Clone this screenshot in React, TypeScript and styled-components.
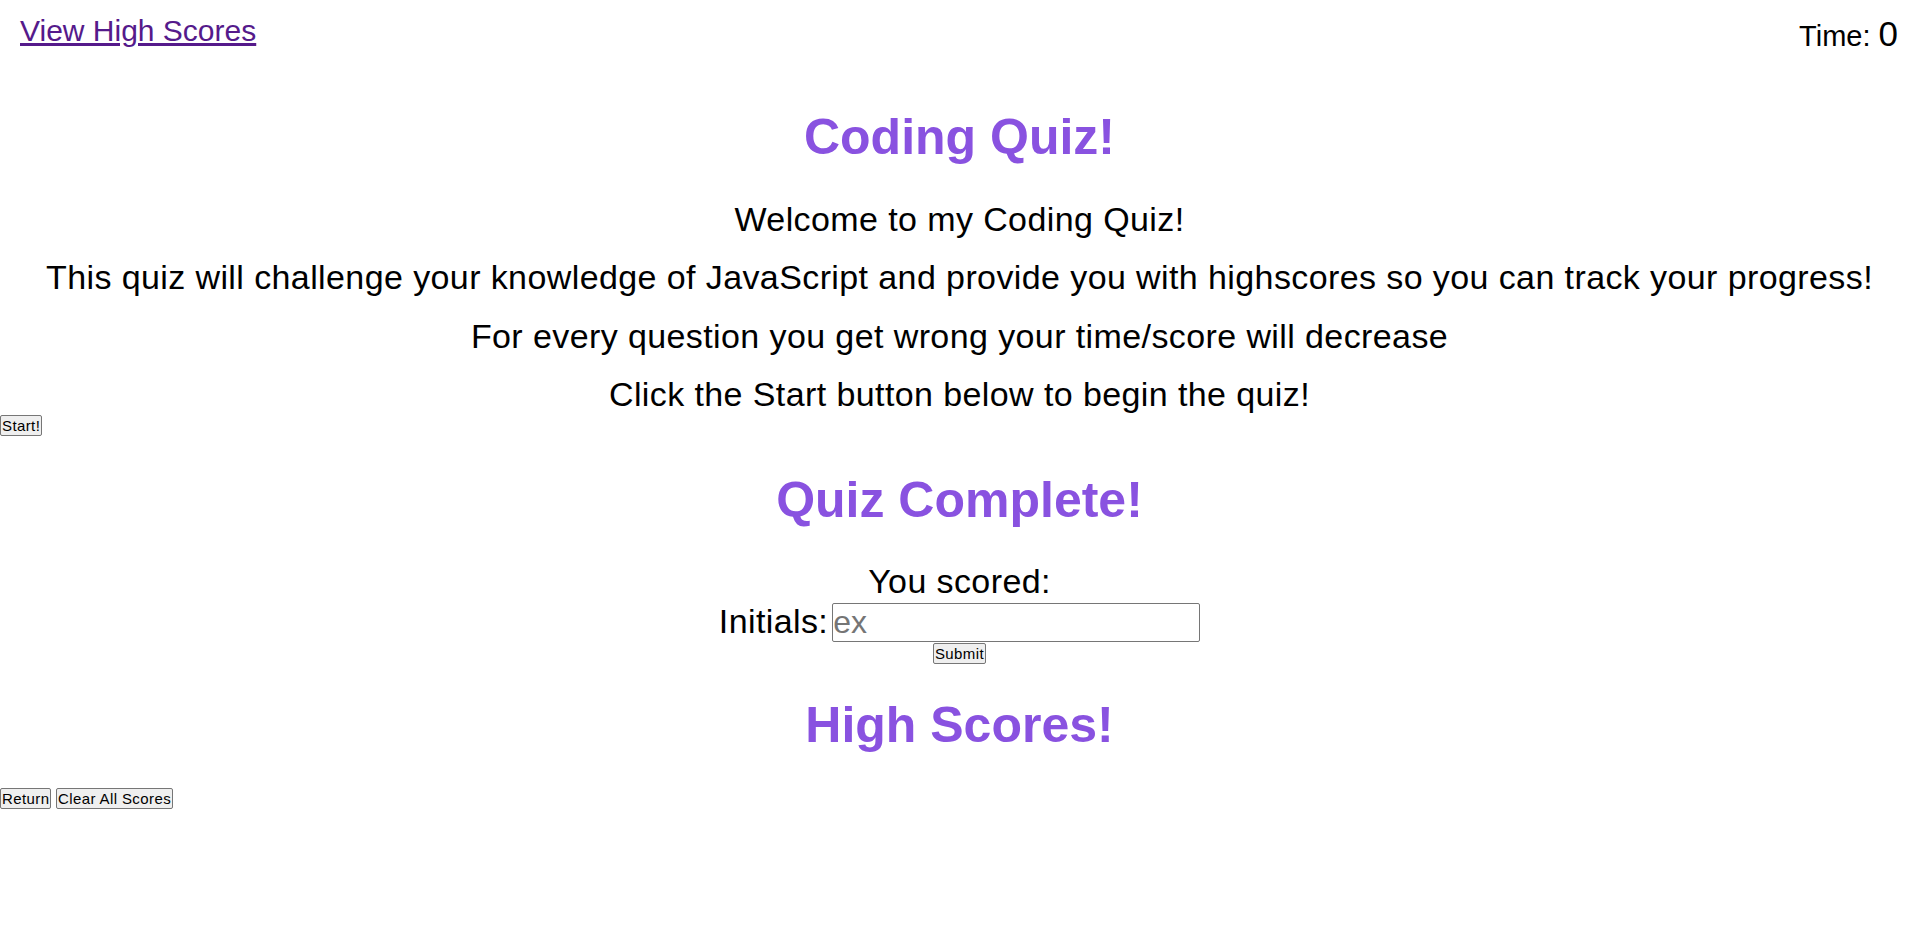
import React from "react";
import styled, { createGlobalStyle } from "styled-components";

const GlobalStyle = createGlobalStyle`
  html, body {
    margin: 0;
    padding: 0;
    background: #ffffff;
  }
  body {
    font-family: "Liberation Sans", Arial, sans-serif;
    color: #000000;
  }
`;

const Page = styled.div`
  display: flex;
  flex-direction: column;
  align-items: stretch;
  min-height: 929px;
`;

const Header = styled.header`
  display: flex;
  justify-content: space-between;
  align-items: flex-start;
  padding: 14px 21px 0 20px;
`;

const HighScoresLink = styled.a`
  font-size: 30px;
  color: #551a8b;
  text-decoration: underline;
`;

const Timer = styled.div`
  font-size: 29px;
`;

const TimerCount = styled.span`
  font-size: 35px;
`;

const Title = styled.h1<{ $top: number }>`
  margin: ${(p) => p.$top}px 0 0;
  font-size: 50px;
  font-weight: bold;
  color: #8952e0;
  text-align: center;
  line-height: normal;
`;

const Intro = styled.div`
  display: flex;
  flex-direction: column;
  gap: 19.3px;
  margin-top: 34.2px;
`;

const BodyText = styled.p`
  margin: 0;
  font-size: 34px;
  letter-spacing: 0.4px;
  text-align: center;
`;

const Button = styled.button`
  font-family: "Liberation Sans", Arial, sans-serif;
  font-size: 15px;
  letter-spacing: 0.4px;
  line-height: normal;
  color: #000000;
  background: #efefef;
  border: 1px solid #767676;
  border-radius: 2px;
  padding: 1px 1px;
  cursor: pointer;
`;

const StartButton = styled(Button)`
  align-self: flex-start;
  margin-top: 0.5px;
`;

const ScoreForm = styled.form`
  margin: 0;
  text-align: center;
`;

const ScoreLine = styled(BodyText)`
  margin-top: 33.2px;
`;

const InitialsRow = styled.div`
  margin-top: 1.2px;
  font-size: 34px;
  letter-spacing: 0.4px;
  text-align: center;
`;

const InitialsInput = styled.input`
  box-sizing: border-box;
  width: 368px;
  height: 38.8px;
  padding: 0;
  margin: 0 0 0 4px;
  font-family: "Liberation Sans", Arial, sans-serif;
  font-size: 32px;
  letter-spacing: 0;
  line-height: normal;
  border: 1px solid #767676;
  border-radius: 2px;
  vertical-align: baseline;
  &::placeholder {
    color: #757575;
  }
`;

const SubmitButton = styled(Button)`
  display: block;
  margin: 1.5px auto 0;
`;

const Actions = styled.div`
  display: flex;
  gap: 4.5px;
  margin-top: 34.7px;
`;

export default function App() {
  return (
    <>
      <GlobalStyle />
      <Page>
        <Header>
          <HighScoresLink href="#">View High Scores</HighScoresLink>
          <Timer>
            Time: <TimerCount>0</TimerCount>
          </Timer>
        </Header>

        <Title $top={54}>Coding Quiz!</Title>
        <Intro>
          <BodyText>Welcome to my Coding Quiz!</BodyText>
          <BodyText>
            This quiz will challenge your knowledge of JavaScript and provide you with
            highscores so you can track your progress!
          </BodyText>
          <BodyText>For every question you get wrong your time/score will decrease</BodyText>
          <BodyText>Click the Start button below to begin the quiz!</BodyText>
        </Intro>
        <StartButton type="button">Start!</StartButton>

        <Title $top={35}>Quiz Complete!</Title>
        <ScoreForm onSubmit={(e) => e.preventDefault()}>
          <ScoreLine>You scored:</ScoreLine>
          <InitialsRow>
            <label htmlFor="initials">Initials:</label>
            <InitialsInput id="initials" type="text" placeholder="ex" />
          </InitialsRow>
          <SubmitButton type="submit">Submit</SubmitButton>
        </ScoreForm>

        <Title $top={31.3}>High Scores!</Title>
        <Actions>
          <Button type="button">Return</Button>
          <Button type="button">Clear All Scores</Button>
        </Actions>
      </Page>
    </>
  );
}
